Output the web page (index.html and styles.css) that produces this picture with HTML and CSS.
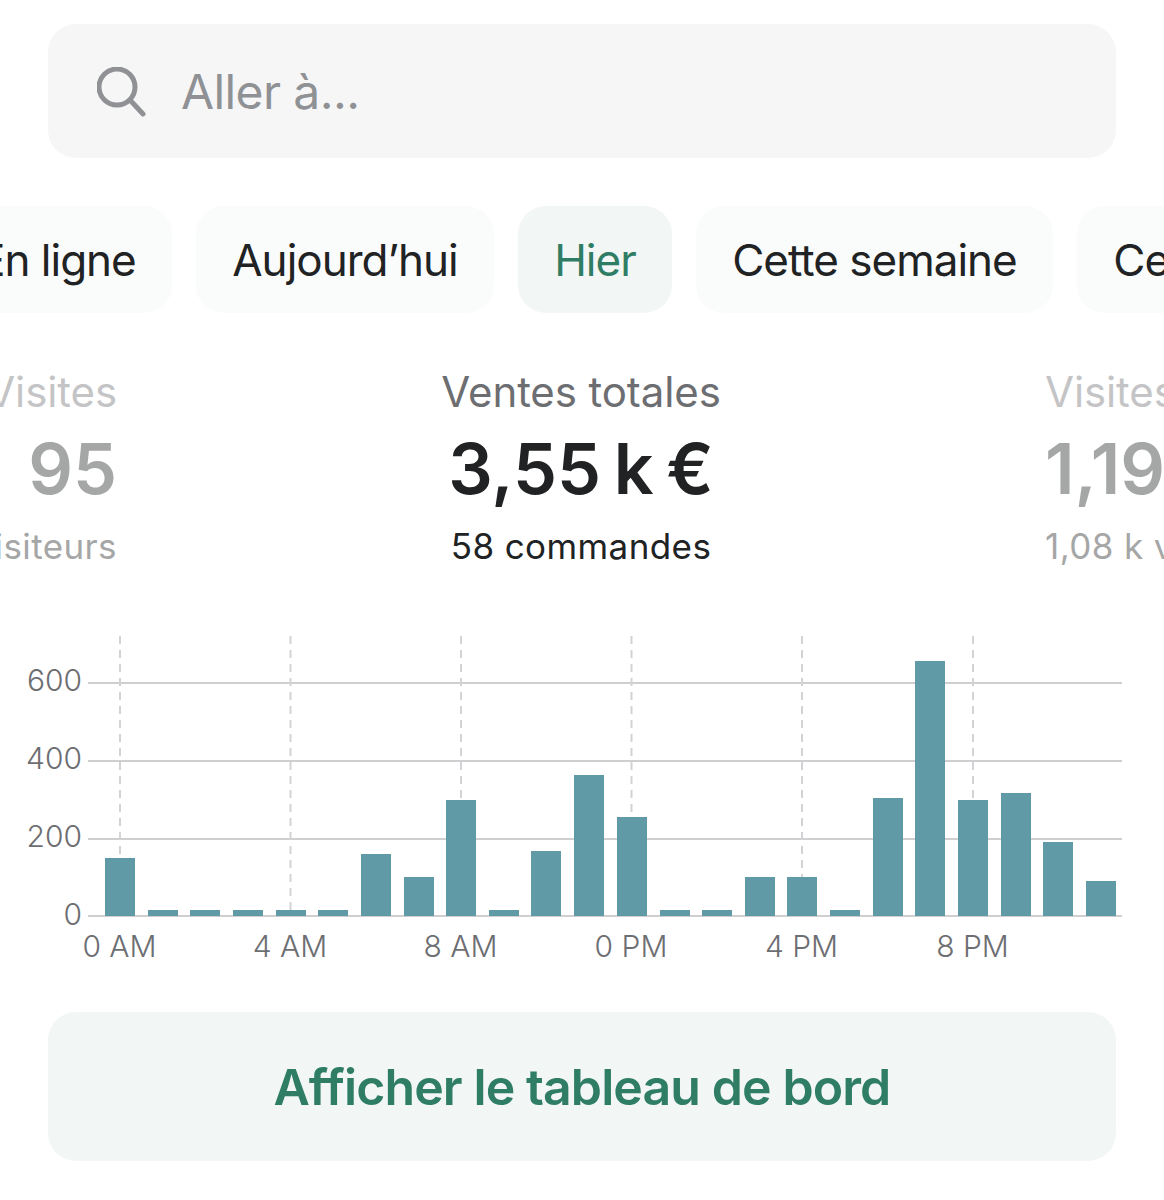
FILE: index.html
```html
<!DOCTYPE html>
<html lang="fr">
<head>
	<title>Accueil</title>
	<link rel="stylesheet" href="styles.css">
</head>
<body>
<div class="page">
	<div class="search">
		<svg class="search-ico" width="50" height="50" viewBox="0 0 50 50">
			<circle cx="20" cy="20" r="18"/>
			<path d="M33 33L46 47"/>
		</svg>
		<span class="search-txt">Aller à...</span>
	</div>

	<div class="tabs">
		<span class="tab">En ligne</span>
		<span class="tab">Aujourd’hui</span>
		<span class="tab on">Hier</span>
		<span class="tab">Cette semaine</span>
		<span class="tab">Ce mois-ci</span>
	</div>

	<div class="stats">
		<div class="stat stat-l">
			<p class="st-name">Visites</p>
			<p class="st-val">95</p>
			<p class="st-sub">87 visiteurs</p>
		</div>
		<div class="stat stat-c">
			<p class="st-name">Ventes totales</p>
			<p class="st-val">3,55 k €</p>
			<p class="st-sub">58 commandes</p>
		</div>
		<div class="stat stat-r">
			<p class="st-name">Visites</p>
			<p class="st-val">1,19 k</p>
			<p class="st-sub">1,08 k visiteurs</p>
		</div>
	</div>

	<svg class="chart" width="1164" height="350" viewBox="0 620 1164 350">
		<g class="grid">
			<path d="M88 683H1122"/>
			<path d="M88 761H1122"/>
			<path d="M88 839H1122"/>
			<path d="M88 916H1122"/>
		</g>
		<g class="dash">
			<path d="M120 636V858"/>
			<path d="M290.5 636V910"/>
			<path d="M461 636V800"/>
			<path d="M631.5 636V817"/>
			<path d="M802 636V877"/>
			<path d="M973 636V800"/>
		</g>
		<g class="bars">
			<rect x="105" y="858" width="30" height="58"/>
			<rect x="148" y="910" width="30" height="6"/>
			<rect x="190" y="910" width="30" height="6"/>
			<rect x="233" y="910" width="30" height="6"/>
			<rect x="276" y="910" width="30" height="6"/>
			<rect x="318" y="910" width="30" height="6"/>
			<rect x="361" y="854" width="30" height="62"/>
			<rect x="404" y="877" width="30" height="39"/>
			<rect x="446" y="800" width="30" height="116"/>
			<rect x="489" y="910" width="30" height="6"/>
			<rect x="531" y="851" width="30" height="65"/>
			<rect x="574" y="775" width="30" height="141"/>
			<rect x="617" y="817" width="30" height="99"/>
			<rect x="660" y="910" width="30" height="6"/>
			<rect x="702" y="910" width="30" height="6"/>
			<rect x="745" y="877" width="30" height="39"/>
			<rect x="787" y="877" width="30" height="39"/>
			<rect x="830" y="910" width="30" height="6"/>
			<rect x="873" y="798" width="30" height="118"/>
			<rect x="915" y="661" width="30" height="255"/>
			<rect x="958" y="800" width="30" height="116"/>
			<rect x="1001" y="793" width="30" height="123"/>
			<rect x="1043" y="842" width="30" height="74"/>
			<rect x="1086" y="881" width="30" height="35"/>
		</g>
		<g class="y-lab">
			<text x="82" y="691">600</text>
			<text x="82" y="769">400</text>
			<text x="82" y="847">200</text>
			<text x="82" y="925">0</text>
		</g>
		<g class="x-lab">
			<text x="119.5" y="957">0 AM</text>
			<text x="290" y="957">4 AM</text>
			<text x="460.5" y="957">8 AM</text>
			<text x="631" y="957">0 PM</text>
			<text x="801.5" y="957">4 PM</text>
			<text x="972.5" y="957">8 PM</text>
		</g>
	</svg>

	<div class="dash-btn">Afficher le tableau de bord</div>
</div>
</body>
</html>
```

FILE: styles.css
```css
html,body{
	margin: 0;
	padding: 0;
	background-color: #fff;
}
p{
	margin: 0;
}
.page{
	width: 1164px;
	height: 1200px;
	overflow: hidden;
	font-family: Inter, "Liberation Sans", sans-serif;
	color: #202223;
}
.search{
	display: flex;
	align-items: center;
	height: 134px;
	margin: 24px 48px 0;
	padding-left: 49px;
	box-sizing: border-box;
	border-radius: 28px;
	background-color: #f6f6f7;
}
.search-ico{
	flex: none;
	margin-top: 1px;
}
.search-ico circle,.search-ico path{
	fill: none;
	stroke: #8f9195;
	stroke-width: 5;
	stroke-linecap: round;
}
.search-txt{
	margin-left: 34px;
	font-size: 48px;
	letter-spacing: -0.6px;
	color: #8f9195;
}
.tabs{
	display: flex;
	gap: 23.5px;
	margin: 48px 0 0 -57.5px;
}
.tab{
	flex: none;
	height: 107px;
	line-height: 108px;
	padding: 0 36.5px;
	border-radius: 28px;
	font-size: 44px;
	letter-spacing: -1px;
	background-color: #fafbfb;
}
.tab.on{
	color: #2f7d64;
	background-color: #f2f6f5;
}
.stats{
	display: grid;
	grid-template-columns: 117px 1fr 119px;
	margin-top: 52px;
	overflow: hidden;
}
.stat{
	display: flex;
	flex-direction: column;
	white-space: nowrap;
	min-width: 0;
}
.stat-l{
	align-items: flex-end;
}
.stat-c{
	align-items: center;
}
.stat-r{
	align-items: flex-start;
}
.st-name{
	height: 54px;
	line-height: 54px;
	font-size: 42px;
	letter-spacing: -0.1px;
	color: #6d6e72;
}
.st-val{
	height: 103px;
	line-height: 100px;
	font-size: 70px;
	font-weight: 600;
	word-spacing: -5px;
}
.st-sub{
	height: 48px;
	line-height: 48px;
	font-size: 35px;
	letter-spacing: 0.4px;
}
.stat-l,.stat-r{
	opacity: 0.4;
}
.chart{
	display: block;
	margin-top: 50px;
}
.grid path{
	fill: none;
	stroke: #cfcfd1;
	stroke-width: 2;
}
.dash path{
	fill: none;
	stroke: #d3d3d5;
	stroke-width: 2;
	stroke-dasharray: 8 6;
}
.bars rect{
	fill: #5f9aa6;
}
.y-lab text,.x-lab text{
	font-size: 30px;
	font-weight: 300;
	fill: #6d6e72;
}
.y-lab text{
	text-anchor: end;
}
.x-lab text{
	text-anchor: middle;
}
.dash-btn{
	height: 149px;
	line-height: 151px;
	margin: 42px 48px 0;
	border-radius: 28px;
	text-align: center;
	font-size: 50px;
	font-weight: 600;
	letter-spacing: -0.9px;
	color: #2f7d64;
	background-color: #f2f6f5;
}
```
